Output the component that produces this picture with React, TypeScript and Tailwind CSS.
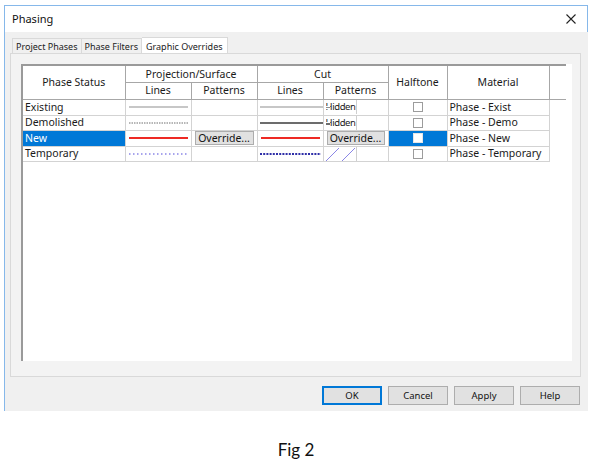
import React from "react";

type LineKind = "thin" | "dashed" | "red" | "dotted" | "thick" | "dense";

const lineSpec: Record<LineKind, { color: string; width: number; dash?: string }> = {
  thin: { color: "#8f8f8f", width: 1 },
  dashed: { color: "#6f6f6f", width: 1, dash: "1.5 1" },
  red: { color: "#ee2a24", width: 2 },
  dotted: { color: "#8a86e6", width: 1.5, dash: "1.5 2.5" },
  thick: { color: "#6c6c6c", width: 2 },
  dense: { color: "#2f2fa8", width: 2, dash: "2 1.2" },
};

function LineSample({ kind }: { kind: LineKind }) {
  const s = lineSpec[kind];
  return (
    <svg width="100%" height="4" className="block">
      <line x1="0" y1="2" x2="100%" y2="2" stroke={s.color} strokeWidth={s.width} strokeDasharray={s.dash} />
    </svg>
  );
}

function Check({ selected = false }: { selected?: boolean }) {
  return (
    <div className="flex justify-center">
      <div
        className={
          selected
            ? "h-[10px] w-[10px] border border-[#e6e6e6] bg-white"
            : "h-[10px] w-[10px] border border-[#9c9c9c] bg-white"
        }
      />
    </div>
  );
}

function OverrideButton() {
  return (
    <div className="mx-[1px] flex h-[14px] items-center justify-center border border-[#adadad] bg-[#e1e1e1] text-[10.5px] leading-none text-[#111]">
      Override...
    </div>
  );
}

// the cut line runs on into the pattern cell and covers the start of "Hidden"
function HiddenCell({ kind }: { kind: LineKind }) {
  const s = lineSpec[kind];
  return (
    <div className="flex h-full">
      <div className="relative w-[31px] overflow-hidden whitespace-nowrap border-r border-[#cfcfcf] text-[9.5px] leading-[14px] tracking-[-0.4px]">
        Hidden
        <div className="absolute left-0 top-[6px] w-[4px] bg-white" style={{ height: s.width + 2 }}>
          <div className="mt-[1px] w-full" style={{ height: s.width, background: s.color }} />
        </div>
      </div>
      <div className="flex-1" />
    </div>
  );
}

function HatchCell() {
  return (
    <div className="flex h-full">
      <div className="w-[31px] border-r border-[#cfcfcf]">
        <svg width="31" height="14" className="block">
          <line x1="0" y1="14" x2="13" y2="1" stroke="#8a86e6" strokeWidth="1" />
          <line x1="16" y1="14" x2="29" y2="1" stroke="#8a86e6" strokeWidth="1" />
        </svg>
      </div>
      <div className="flex-1" />
    </div>
  );
}

const headCell = "border border-[#a7a7a7] bg-white px-[2px] text-center font-normal text-[10.5px] leading-none text-[#1a1a1a]";
const cell = "border border-[#d3d3d3] px-[2px] text-[10.5px] leading-none text-[#1a1a1a]";

export default function App() {
  return (
    <div className="h-[468px] w-[592px] overflow-hidden bg-white font-['Noto_Sans',sans-serif] text-black">
      <div className="ml-[4px] pt-[5px]">
        <div className="flex h-[406px] w-[584px] flex-col border-l border-[#86b8ea]">
          <div className="flex h-[27px] items-center justify-between border-t border-r border-[#86b8ea] bg-white pl-[7px] pr-[11px]">
            <span className="text-[11px] text-[#111]">Phasing</span>
            <svg width="10" height="10" viewBox="0 0 10 10">
              <path d="M0.5 0.5 L9.5 9.5 M9.5 0.5 L0.5 9.5" stroke="#222" strokeWidth="1.1" />
            </svg>
          </div>

          <div className="flex flex-1 flex-col bg-[#f0f0f0] pl-[5px]">
            <div className="mt-[4px] flex h-[17px] items-end pl-[2px] text-[9px] leading-none text-[#222]">
              <div className="flex h-[15px] items-center border border-b-0 border-[#d9d9d9] bg-[#f0f0f0] px-[3px]">Project Phases</div>
              <div className="flex h-[15px] items-center border border-b-0 border-l-0 border-[#d9d9d9] bg-[#f0f0f0] px-[3px]">Phase Filters</div>
              <div className="-mb-[1px] flex h-[17px] items-center border border-b-0 border-l-0 border-[#d9d9d9] bg-white px-[4px]">Graphic Overrides</div>
            </div>

            <div className="h-[324px] w-[571px] border border-[#d9d9d9] bg-[#f3f3f3] pl-[10px] pt-[10px]">
              <div className="h-[297px] w-[551px] border-l-2 border-[#9a9a9a] bg-white">
                <table className="table-fixed border-collapse">
                  <colgroup>
                    <col className="w-[102px]" />
                    <col className="w-[66px]" />
                    <col className="w-[66px]" />
                    <col className="w-[66px]" />
                    <col className="w-[65px]" />
                    <col className="w-[59px]" />
                    <col className="w-[102px]" />
                    <col className="w-[17px]" />
                  </colgroup>
                  <thead>
                    <tr className="h-[17px] border-t-2 border-[#9a9a9a]">
                      <th rowSpan={2} className={headCell + " border-l-0"}>Phase Status</th>
                      <th colSpan={2} className={headCell}>Projection/Surface</th>
                      <th colSpan={2} className={headCell}>Cut</th>
                      <th rowSpan={2} className={headCell}>Halftone</th>
                      <th rowSpan={2} className={headCell}>Material</th>
                      <th rowSpan={2} className="border-y border-[#a7a7a7] bg-white" />
                    </tr>
                    <tr className="h-[17px]">
                      <th className={headCell}>Lines</th>
                      <th className={headCell}>Patterns</th>
                      <th className={headCell}>Lines</th>
                      <th className={headCell}>Patterns</th>
                    </tr>
                  </thead>
                  <tbody>
                    <tr className="h-[16px]">
                      <td className={cell + " border-l-0"}>Existing</td>
                      <td className={cell + " px-[3px]"}><LineSample kind="thin" /></td>
                      <td className={cell} />
                      <td className={cell + " pr-0"}><LineSample kind="thin" /></td>
                      <td className={cell + " p-0"}><HiddenCell kind="thin" /></td>
                      <td className={cell}><Check /></td>
                      <td className={cell}>Phase - Exist</td>
                      <td />
                    </tr>
                    <tr className="h-[15px]">
                      <td className={cell + " border-l-0"}>Demolished</td>
                      <td className={cell + " px-[3px]"}><LineSample kind="dashed" /></td>
                      <td className={cell} />
                      <td className={cell + " pr-0"}><LineSample kind="thick" /></td>
                      <td className={cell + " p-0"}><HiddenCell kind="thick" /></td>
                      <td className={cell}><Check /></td>
                      <td className={cell}>Phase - Demo</td>
                      <td />
                    </tr>
                    <tr className="h-[16px]">
                      <td className={cell + " border-l-0 bg-[#0078d7] text-white"}>New</td>
                      <td className={cell + " border-[#7fb2e5] px-[3px]"}><LineSample kind="red" /></td>
                      <td className={cell + " border-[#7fb2e5] p-0"}><OverrideButton /></td>
                      <td className={cell + " border-[#7fb2e5] px-[3px]"}><LineSample kind="red" /></td>
                      <td className={cell + " border-[#7fb2e5] p-0"}><OverrideButton /></td>
                      <td className={cell + " border-[#7fb2e5] bg-[#0078d7]"}><Check selected /></td>
                      <td className={cell + " border-[#3c86d0]"}>Phase - New</td>
                      <td />
                    </tr>
                    <tr className="h-[15px]">
                      <td className={cell + " border-l-0"}>Temporary</td>
                      <td className={cell + " px-[3px]"}><LineSample kind="dotted" /></td>
                      <td className={cell} />
                      <td className={cell}><LineSample kind="dense" /></td>
                      <td className={cell + " p-0"}><HatchCell /></td>
                      <td className={cell}><Check /></td>
                      <td className={cell}>Phase - Temporary</td>
                      <td />
                    </tr>
                  </tbody>
                </table>
              </div>
            </div>

            <div className="mt-[9px] flex justify-end gap-[6px] pr-[8px] text-[9.5px] leading-none text-[#111]">
              <button className="flex h-[19px] w-[60px] items-center justify-center border-2 border-[#0078d7] bg-[#e1e1e1]">OK</button>
              <button className="flex h-[19px] w-[60px] items-center justify-center border border-[#adadad] bg-[#e1e1e1]">Cancel</button>
              <button className="flex h-[19px] w-[60px] items-center justify-center border border-[#adadad] bg-[#e1e1e1]">Apply</button>
              <button className="flex h-[19px] w-[60px] items-center justify-center border border-[#adadad] bg-[#e1e1e1]">Help</button>
            </div>
          </div>
        </div>
      </div>

      <div className="mt-[26px] text-center font-['Lato',sans-serif] text-[17px] text-[#111]">Fig 2</div>
    </div>
  );
}
